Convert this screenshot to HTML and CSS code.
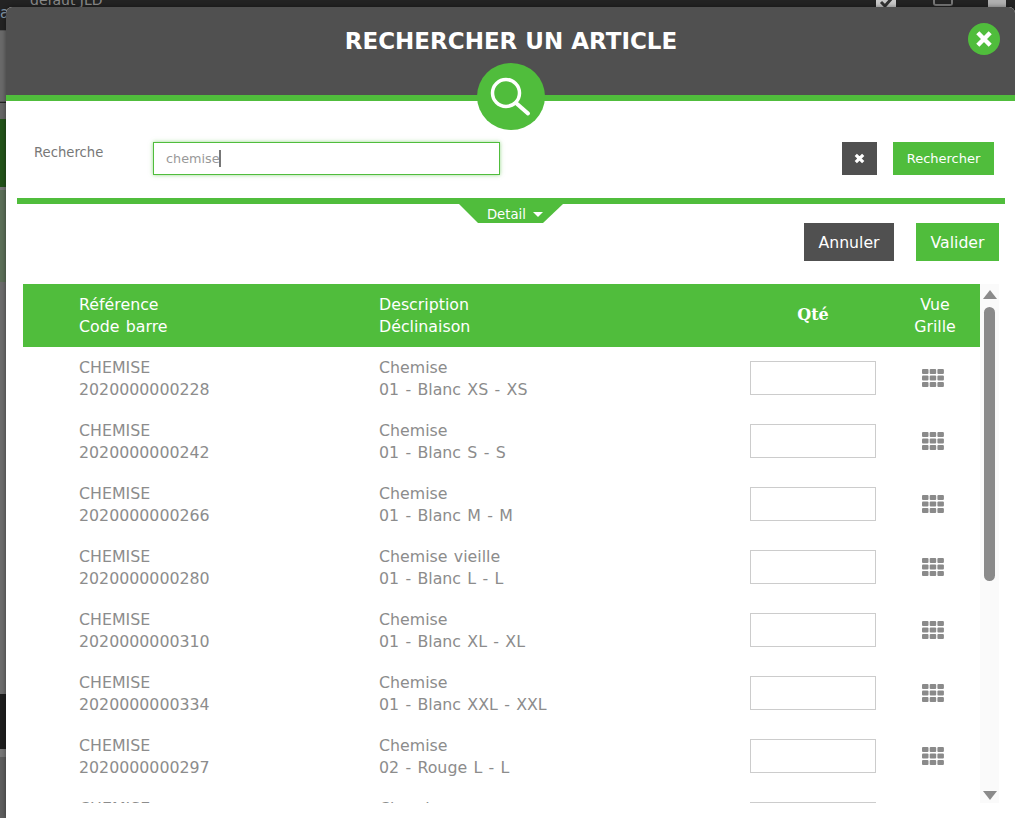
FILE: index.html
```html
<!DOCTYPE html>
<html lang="fr">
<head>
<meta charset="utf-8">
<title>Rechercher un article</title>
<link rel="stylesheet" href="styles.css">
</head>
<body>
<div class="backdrop">
  <span class="bg-text">défaut JLD</span>
  <span class="bg-letter">a</span>
  <div class="bg-tools">
    <svg class="bg-check" width="22" height="8" viewBox="0 0 22 8"><rect x="0" y="-6" width="20" height="14" fill="#c9c9c9"/><path d="M5 2l4 4 7-8" fill="none" stroke="#333" stroke-width="3"/></svg>
    <span class="bg-box"></span>
    <span class="bg-square"></span>
  </div>
  <i class="bg-band b1"></i><i class="bg-band b2"></i><i class="bg-band b3"></i><i class="bg-band b4"></i><i class="bg-band b5"></i><i class="bg-band b6"></i><i class="bg-band b7"></i>
</div>
<main class="modal">
  <header class="modal-head">
    <h1>RECHERCHER UN ARTICLE</h1>
    <button class="close" type="button" aria-label="Fermer">
      <svg width="18" height="18" viewBox="0 0 18 18"><path d="M2.800 2.800l12.400 12.400M15.200 2.800l-12.400 12.400" stroke="#fff" stroke-width="4.400" fill="none"/></svg>
    </button>
    <div class="search-badge">
      <svg width="44" height="44" viewBox="0 0 44 44"><circle cx="17" cy="18" r="13.500" fill="none" stroke="#fff" stroke-width="3.500"/><path d="M27 28l12 10.500" stroke="#fff" stroke-width="4" stroke-linecap="round"/></svg>
    </div>
  </header>
  <section class="search-row">
    <label class="search-label" for="q">Recherche</label>
    <div class="search-input"><span>chemise</span><i class="caret"></i></div>
    <button class="icon-btn" type="button" aria-label="Effacer">
      <svg width="11" height="11" viewBox="0 0 11 11"><path d="M1.800 1.800l7.400 7.400M9.200 1.800l-7.400 7.400" stroke="#fff" stroke-width="3.200" fill="none"/></svg>
    </button>
    <button class="search-btn" type="button">Rechercher</button>
  </section>
  <div class="divider"><div class="detail-tab">Detail <i class="tri"></i></div></div>
  <div class="actions">
    <button class="btn dark" type="button">Annuler</button>
    <button class="btn green" type="button">Valider</button>
  </div>
  <section class="results">
    <div class="list">
      <div class="row head">
        <div class="c-ref">Référence<br>Code barre</div>
        <div class="c-desc">Description<br>Déclinaison</div>
        <div class="c-qty">Qté</div>
        <div class="c-grid">Vue<br>Grille</div>
      </div>
      <div class="row"><div class="c-ref">CHEMISE<br>2020000000228</div><div class="c-desc">Chemise<br>01 - Blanc XS - XS</div><div class="c-qty"><span class="qty"></span></div><div class="c-grid"><svg class="grid-ico" width="22" height="18" viewBox="0 0 22 18"><use href="#g"/></svg></div></div>
      <div class="row"><div class="c-ref">CHEMISE<br>2020000000242</div><div class="c-desc">Chemise<br>01 - Blanc S - S</div><div class="c-qty"><span class="qty"></span></div><div class="c-grid"><svg class="grid-ico" width="22" height="18" viewBox="0 0 22 18"><use href="#g"/></svg></div></div>
      <div class="row"><div class="c-ref">CHEMISE<br>2020000000266</div><div class="c-desc">Chemise<br>01 - Blanc M - M</div><div class="c-qty"><span class="qty"></span></div><div class="c-grid"><svg class="grid-ico" width="22" height="18" viewBox="0 0 22 18"><use href="#g"/></svg></div></div>
      <div class="row"><div class="c-ref">CHEMISE<br>2020000000280</div><div class="c-desc">Chemise vieille<br>01 - Blanc L - L</div><div class="c-qty"><span class="qty"></span></div><div class="c-grid"><svg class="grid-ico" width="22" height="18" viewBox="0 0 22 18"><use href="#g"/></svg></div></div>
      <div class="row"><div class="c-ref">CHEMISE<br>2020000000310</div><div class="c-desc">Chemise<br>01 - Blanc XL - XL</div><div class="c-qty"><span class="qty"></span></div><div class="c-grid"><svg class="grid-ico" width="22" height="18" viewBox="0 0 22 18"><use href="#g"/></svg></div></div>
      <div class="row"><div class="c-ref">CHEMISE<br>2020000000334</div><div class="c-desc">Chemise<br>01 - Blanc XXL - XXL</div><div class="c-qty"><span class="qty"></span></div><div class="c-grid"><svg class="grid-ico" width="22" height="18" viewBox="0 0 22 18"><use href="#g"/></svg></div></div>
      <div class="row"><div class="c-ref">CHEMISE<br>2020000000297</div><div class="c-desc">Chemise<br>02 - Rouge L - L</div><div class="c-qty"><span class="qty"></span></div><div class="c-grid"><svg class="grid-ico" width="22" height="18" viewBox="0 0 22 18"><use href="#g"/></svg></div></div>
      <div class="row"><div class="c-ref">CHEMISE<br>2020000000303</div><div class="c-desc">Chemise<br>02 - Rouge XL - XL</div><div class="c-qty"><span class="qty"></span></div><div class="c-grid"></div></div>
    </div>
    <div class="scrollbar">
      <i class="arrow up"></i>
      <i class="thumb"></i>
      <i class="arrow down"></i>
    </div>
  </section>
</main>
<svg class="defs" width="0" height="0"><defs><g id="g" fill="#8a8a8a"><rect x="0" y="0" width="6.500" height="5" rx="1"/><rect x="7.700" y="0" width="6.500" height="5" rx="1"/><rect x="15.400" y="0" width="6.500" height="5" rx="1"/><rect x="0" y="6.500" width="6.500" height="5" rx="1"/><rect x="7.700" y="6.500" width="6.500" height="5" rx="1"/><rect x="15.400" y="6.500" width="6.500" height="5" rx="1"/><rect x="0" y="13" width="6.500" height="5" rx="1"/><rect x="7.700" y="13" width="6.500" height="5" rx="1"/><rect x="15.400" y="13" width="6.500" height="5" rx="1"/></g></defs></svg>
</body>
</html>
```
FILE: styles.css
```css
* { box-sizing: border-box; }
html, body { margin: 0; height: 100%; overflow: hidden; }
body { width: 1015px; height: 818px; position: relative; background: #232323; font-family: "DejaVu Sans", sans-serif; color: #8c8c8c; }
button { font-family: inherit; border: 0; padding: 0; }
.backdrop { position: absolute; inset: 0; overflow: hidden; }
.bg-text { position: absolute; left: 30px; top: -8px; font-size: 14px; color: #8a8a8a; }
.bg-letter { position: absolute; left: 0; top: 4px; font-size: 15px; color: #8296a8; }
.bg-tools { position: absolute; left: 876px; top: 0; display: flex; gap: 35px; }
.bg-box { width: 20px; height: 6px; border: 2px solid #777; border-top: 0; border-radius: 0 0 3px 3px; }
.bg-square { width: 18px; height: 7px; background: #b0b0b0; }
.bg-check { display: block; }
.bg-band { position: absolute; left: 0; width: 6px; }
.b1 { top: 30px; height: 72px; background: #6a6a6a; border-top: 1px solid #555; border-bottom: 1px solid #555; }
.b2 { top: 103px; height: 16px; background: #666; }
.b3 { top: 119px; height: 68px; background: #23531a; }
.b4 { top: 187px; height: 3px; background: #777; }
.b5 { top: 190px; height: 92px; background: #5c6f58; }
.b6 { top: 282px; height: 412px; background: #6c6c6c; }
.b7 { top: 694px; height: 124px; background: linear-gradient(#1e1e1e 0, #1e1e1e 55px, #777 55px, #777 63px, #5e5e5e 63px); }
.modal { position: absolute; left: 6px; top: 7px; width: 1009px; height: 811px; background: #fff; border-radius: 6px 6px 0 0; overflow: hidden; box-shadow: 0 0 5px rgba(0,0,0,.45); }
.modal-head { position: relative; height: 94px; background: #505050; border-bottom: 6px solid #50bd3c; display: flex; justify-content: center; }
.modal-head h1 { margin: 17px 0 0 1px; font-size: 23px; line-height: 34px; font-weight: 700; color: #fff; }
.close { position: absolute; right: 15px; top: 16px; width: 32px; height: 32px; border-radius: 50%; background: #50bd3c; display: flex; align-items: center; justify-content: center; }
.search-badge { position: absolute; left: 471px; top: 56px; width: 68px; height: 67px; border-radius: 50%; background: #50bd3c; display: flex; align-items: center; justify-content: center; z-index: 2; }
.search-row { height: 97px; padding: 41px 21px 0 28px; display: flex; align-items: flex-start; }
.search-label { width: 119px; margin-top: 1px; font-size: 13.200px; line-height: 20px; color: #777; }
.search-input { width: 347px; height: 33px; border: 1px solid #50bd3c; box-shadow: 0 0 4px rgba(80,189,60,.6); padding: 0 12px; font-size: 12.800px; line-height: 31px; color: #999; display: flex; align-items: center; }
.caret { width: 2px; height: 17px; background: #777; margin-left: -1px; }
.icon-btn { margin-left: auto; width: 35px; height: 33px; background: #505050; display: flex; align-items: center; justify-content: center; }
.search-btn { margin-left: 16px; width: 101px; height: 33px; background: #50bd3c; color: #fff; font-size: 13px; }
.divider { position: relative; margin: 0 10px 0 11px; height: 6px; background: #50bd3c; display: flex; justify-content: center; }
.detail-tab { position: absolute; left: 442px; top: 6px; width: 104px; height: 19px; padding: 1px 0 0 8px; background: #50bd3c; clip-path: polygon(0 0, 100% 0, 84px 100%, 19px 100%); color: #fff; font-size: 13.200px; line-height: 19px; text-align: center; }
.tri { display: inline-block; width: 0; height: 0; margin-left: 3px; vertical-align: 2px; border-left: 5px solid transparent; border-right: 5px solid transparent; border-top: 5px solid #fff; }
.actions { height: 61px; padding: 19px 16px 0 0; display: flex; justify-content: flex-end; gap: 22px; align-items: flex-start; }
.btn { height: 38px; color: #fff; font-size: 15.700px; }
.btn.dark { width: 90px; background: #505050; }
.btn.green { width: 83px; background: #50bd3c; }
.results { position: absolute; left: 17px; top: 277px; width: 976px; height: 519px; display: flex; overflow: hidden; }
.list { width: 957px; flex: none; overflow: hidden; }
.row { height: 63px; display: flex; font-size: 15.800px; word-spacing: 1.300px; line-height: 22px; padding-top: 10px; }
.row.head { background: #50bd3c; color: #fff; }
.c-ref { margin-left: 56px; width: 300px; flex: none; }
.c-desc { width: 340px; flex: none; }
.c-qty { width: 165px; flex: none; padding-left: 31px; padding-top: 4px; }
.head .c-qty { padding: 10px 0 0; width: 188px; margin-right: -23px; text-align: center; font-family: "DejaVu Serif", serif; font-weight: 700; font-size: 16px; }
.qty { display: block; width: 126px; height: 34px; border: 1px solid #ccc; background: #fff; }
.c-grid { flex: 1; text-align: center; }
.grid-ico { display: block; margin: 12px 0 0 38px; }
.head .c-grid { padding-left: 6px; }
.scrollbar { position: relative; width: 19px; flex: none; background: #fafafa; }
.thumb { position: absolute; left: 4px; top: 23px; width: 11px; height: 274px; border-radius: 6px; background: #8a8a8a; }
.arrow { position: absolute; left: 3px; width: 0; height: 0; border-left: 7px solid transparent; border-right: 7px solid transparent; }
.arrow.up { top: 6px; border-bottom: 9px solid #8a8a8a; }
.arrow.down { bottom: 3px; border-top: 9px solid #8a8a8a; }
.defs { position: absolute; }
```
